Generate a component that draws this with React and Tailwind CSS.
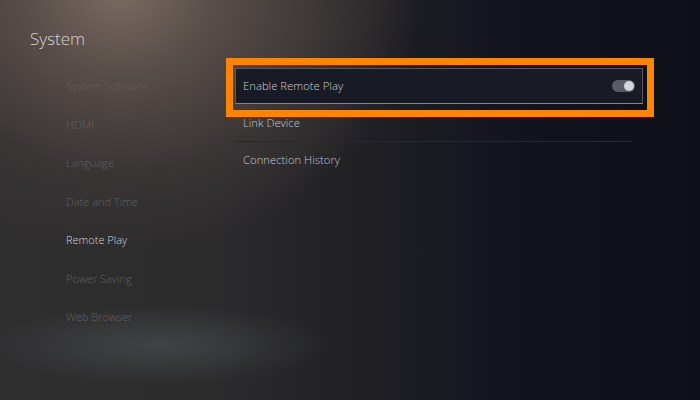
import React from "react";

const menu = [
    "System Software",
    "HDMI",
    "Language",
    "Date and Time",
    "Remote Play",
    "Power Saving",
    "Web Browser",
];

const Toggle = ({ on }) => (
    <div className={`w-[23px] h-[12px] rounded-full bg-[#5a5c66] flex items-center px-[1px] ${on ? "justify-end" : "justify-start"}`}>
        <div className="w-[10px] h-[10px] rounded-full bg-[#d6d6d8]" />
    </div>
);

const App = () => {
    return (
        <div
            className="relative w-[700px] h-[400px] overflow-hidden flex bg-[radial-gradient(ellipse_300px_260px_at_120px_-10px,#7b6c62_0%,#5a4f4a_30%,#3a3535_70%,transparent_100%),radial-gradient(ellipse_170px_40px_at_160px_345px,rgba(82,90,96,0.5)_0%,transparent_100%),linear-gradient(90deg,#302f30_0%,#2c2b2c_30%,#1e1e24_55%,#11131d_75%,#0d0f1a_100%)]"
            style={{ fontFamily: '"Open Sans", "Noto Sans", sans-serif' }}
        >
            {/* left: category + settings list */}
            <div className="w-[226px] shrink-0 pl-[30px] pt-[27px]">
                <h1 className="text-[17px] leading-[24px] font-light text-[#d6d4d4]">System</h1>
                <ul className="mt-[16px] pl-[36px]">
                    {menu.map((m) => (
                        <li
                            key={m}
                            className={`h-[38.5px] flex items-center text-[11px] font-light ${
                                m === "Remote Play" ? "text-[#d4d4d4]" : "text-[#625f5e]"
                            }`}
                        >
                            {m}
                        </li>
                    ))}
                </ul>
            </div>

            {/* right: remote play options */}
            <div className="pt-[58px] w-[428px]">
                <div className="border-[7px] border-[#ff8400] pt-[3px] pl-[2px] pr-[4px] pb-[6px]">
                    <div className="h-[36px] flex items-center justify-between pl-[7px] pr-[7px] bg-[#181a25] border border-[#555865] border-b-[#8c8483]">
                        <span className="text-[11.3px] font-light text-[#d0d0d2]">Enable Remote Play</span>
                        <Toggle on />
                    </div>
                </div>

                <div className="pl-[17px] w-[406px]">
                    <div className="leading-[14px] text-[11.3px] font-light text-[#c6c6c8] -mt-[1px]">Link Device</div>
                </div>
                <div className="ml-[9px] mt-[11px] w-[397px] h-px bg-[#262833]" />
                <div className="pl-[17px] mt-[11px] leading-[14px] text-[11.3px] font-light text-[#c6c6c8]">
                    Connection History
                </div>
            </div>
        </div>
    );
};

export default App;
